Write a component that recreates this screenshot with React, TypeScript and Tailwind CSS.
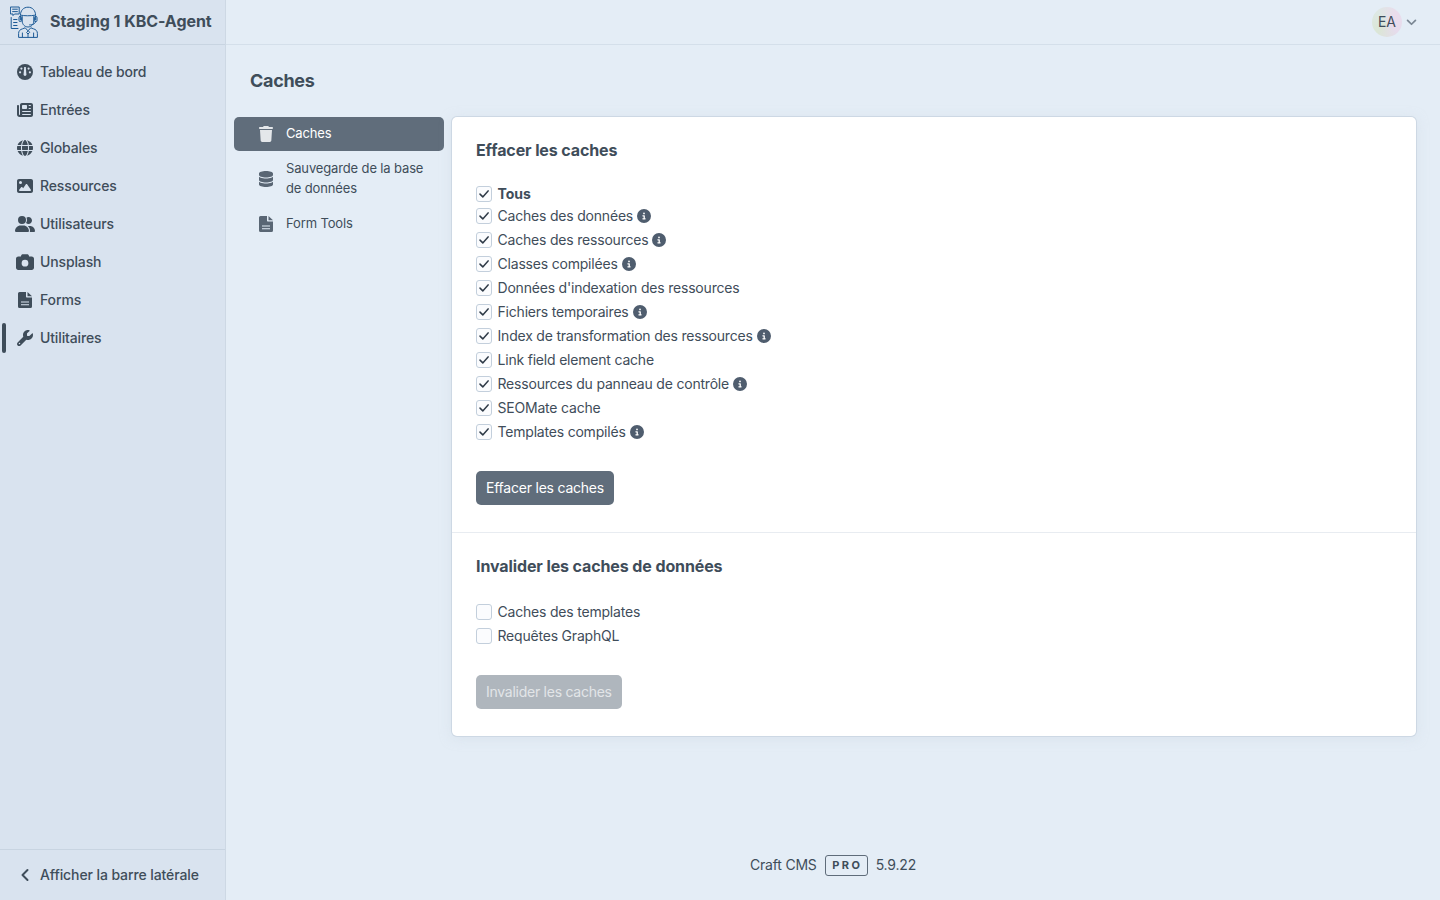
import React from "react";
import { FaNewspaper, FaGlobe, FaImage, FaUserGroup, FaCamera, FaWrench, FaTrash, FaDatabase, FaCircleInfo } from "react-icons/fa6";

function Gauge({ className }: { className?: string }) {
  return (
    <svg viewBox="0 0 16 16" className={className}>
      <circle cx="8" cy="8" r="8" fill="currentColor" />
      <g fill="#d9e3ef">
        <circle cx="3.100" cy="8.300" r="1.100" />
        <circle cx="4.400" cy="4.600" r="1.100" />
        <circle cx="11.600" cy="4.600" r="1.100" />
        <circle cx="12.900" cy="8.300" r="1.100" />
        <path d="M7.200 3h1.600l.6 7.500a1.400 1.400 0 1 1-2.800 0z" />
      </g>
    </svg>
  );
}

function PageIcon({ className, line }: { className?: string; line: string }) {
  return (
    <svg viewBox="0 0 14 16" className={className}>
      <path fill="currentColor" d="M1.500 0H8v4.500c0 .6.400 1 1 1h5V14.500A1.500 1.500 0 0 1 12.500 16h-11A1.500 1.500 0 0 1 0 14.500v-13A1.500 1.500 0 0 1 1.500 0z" />
      <path fill="currentColor" d="M9.500 0 14 4.200H9.500z" />
      <path stroke={line} strokeWidth="1.100" d="M3 10h8M3 12.700h8" />
    </svg>
  );
}

const nav = [
  { label: "Tableau de bord", icon: <Gauge className="h-[16px] w-[16px]" /> },
  { label: "Entrées", icon: <FaNewspaper className="h-[16px] w-[16px]" /> },
  { label: "Globales", icon: <FaGlobe className="h-[16px] w-[16px]" /> },
  { label: "Ressources", icon: <FaImage className="h-[16px] w-[16px]" /> },
  { label: "Utilisateurs", icon: <FaUserGroup className="h-[16px] w-[20px] shrink-0" /> },
  { label: "Unsplash", icon: <FaCamera className="h-[18px] w-[18px] shrink-0" /> },
  { label: "Forms", icon: <PageIcon line="#d9e3ef" className="h-[16px] w-[14px]" /> },
  { label: "Utilitaires", icon: <FaWrench className="h-[16px] w-[16px]" />, active: true },
];

const caches: [string, boolean][] = [
  ["Caches des données", true],
  ["Caches des ressources", true],
  ["Classes compilées", true],
  ["Données d'indexation des ressources", false],
  ["Fichiers temporaires", true],
  ["Index de transformation des ressources", true],
  ["Link field element cache", false],
  ["Ressources du panneau de contrôle", true],
  ["SEOMate cache", false],
  ["Templates compilés", true],
];

function Box({ checked }: { checked: boolean }) {
  return (
    <span className="flex h-4 w-4 shrink-0 items-center justify-center rounded-[3px] border border-[#c3cfdc] bg-[#fbfcfe]">
      {checked && (
        <svg viewBox="0 0 14 14" className="h-[14px] w-[14px]" fill="none" stroke="#2f3b48" strokeWidth="1.500" strokeLinecap="round" strokeLinejoin="round">
          <path d="M3 7.100 5.800 9.900 11.100 3.900" />
        </svg>
      )}
    </span>
  );
}

function Row({ label, info, checked = true, bold = false, h = "h-6" }: { label: string; info?: boolean; checked?: boolean; bold?: boolean; h?: string }) {
  return (
    <div className={`flex ${h} items-center`}>
      <Box checked={checked} />
      <span className={`ml-[5.5px] pb-[2px] ${bold ? "font-bold" : "tracking-[-0.2px]"}`}>{label}</span>
      {info && <FaCircleInfo className="ml-[4px] h-[14px] w-[14px] text-[#4f5d6e]" />}
    </div>
  );
}

export default function App() {
  return (
    <div className="flex min-h-[900px] bg-[#e4edf6] text-[14px] text-[#3f4d5a] font-['Inter',sans-serif]">
      <aside className="flex h-[900px] w-[226px] shrink-0 flex-col border-r border-[#cdd8e4] bg-[#d9e3ef]">
        <div className="flex h-[45px] shrink-0 items-center border-b border-[#c8d4e1] pl-[10px]">
          <svg viewBox="0 0 30 32" className="h-[32px] w-[30px]" fill="none" stroke="#1c5a96" strokeWidth="1" strokeLinejoin="round" strokeLinecap="round">
            <path d="M.8 1h8.400v7H4.500L3 9.600V8H.8z" />
            <path d="M2.600 3.200h4.800M2.600 5.600h4.800" />
            <path d="M1.200 11.500v11h6.800M3.600 13.500h3.400M3.600 16.500h3.400M3.600 19.500h3.400" />
            <path d="M10.400 14V9.500C10.400 4.500 13.500 1.200 18 1.200s7.600 3.300 7.600 8.300V14" />
            <path d="M11 9.200c3 .8 10 .8 14 0" />
            <rect x="9" y="10.500" width="2.600" height="5" rx="1" />
            <rect x="24.400" y="10.500" width="2.600" height="5" rx="1" />
            <path d="M12.200 10.500v4.500c0 3.400 2.600 6 5.800 6s5.800-2.600 5.800-6v-4.500" />
            <path d="M25.600 15.500c0 2.200-2.600 3.400-6 3.400" />
            <path d="M8.600 31v-3.600c0-2.400 1.600-4 4-4.600l2.600-1 2.800 3 2.800-3 2.600 1c2.400.6 4 2.200 4 4.600V31z" />
            <path d="M18 25l-1.400 1.600 1.400 1.400 1.400-1.400zM18 28v3M12.400 31v-4M23.600 31v-4" />
          </svg>
          <span className="ml-[10px] pb-[2px] text-[16px] font-bold tracking-[-0.05px] whitespace-nowrap">Staging 1 KBC-Agent</span>
        </div>
        <nav className="flex flex-1 flex-col pt-[8px]">
          {nav.map(({ label, icon, active }) => (
            <div key={label} className="relative flex h-[38px] items-center pl-[16px] font-medium">
              {active && <span className="absolute left-[2px] top-[4px] h-[30px] w-[4px] rounded-full bg-[#3f4d5a]" />}
              <span className="flex w-[18px] justify-center">{icon}</span>
              <span className="ml-[6px] pb-[2px] tracking-[-0.13px]">{label}</span>
            </div>
          ))}
        </nav>
        <div className="flex h-[51px] shrink-0 items-center border-t border-[#c8d4e1] pl-[16px] font-medium">
          <span className="flex w-[18px] justify-center">
            <svg viewBox="0 0 10 14" className="h-[14px] w-[10px]" fill="none" stroke="#3f4d5a" strokeWidth="2" strokeLinecap="round" strokeLinejoin="round"><path d="M7.500 2 2.500 7l5 5" /></svg>
          </span>
          <span className="ml-[6px] pb-[2px] tracking-[-0.1px]">Afficher la barre latérale</span>
        </div>
      </aside>

      <main className="flex h-[900px] flex-1 flex-col">
        <header className="flex h-[45px] shrink-0 items-center justify-end border-b border-[#d4dfea] pr-[23px]">
          <span className="flex h-[30px] w-[30px] items-center justify-center rounded-full bg-[conic-gradient(from_45deg,#eadcec,#e6dcec,#dbe6d6,#dde8e4,#eadcec)] pb-[2px]">EA</span>
          <svg viewBox="0 0 12 8" className="ml-[4px] h-[7px] w-[11px]" fill="none" stroke="#7b8794" strokeWidth="2" strokeLinecap="round" strokeLinejoin="round"><path d="M1.500 1.500 6 6l4.500-4.500" /></svg>
        </header>

        <h1 className="ml-[24px] mt-[24px] h-[24px] text-[18px] leading-[24px] font-bold tracking-[-0.3px]">Caches</h1>

        <div className="mt-[24px] flex items-start pl-[8px] pr-[24px]">
          <div className="w-[210px] shrink-0 text-[13px] tracking-[-0.14px]">
            <div className="flex h-[34px] items-center rounded-[5px] bg-[#606d7b] pl-[25px] text-white">
              <FaTrash className="h-[16px] w-[14px] text-[#e4e7ea]" />
              <span className="ml-[13px]">Caches</span>
            </div>
            <div className="flex h-[55px] items-center pl-[25px] leading-[20px]">
              <FaDatabase className="h-[16px] w-[14px] shrink-0 text-[#596674]" />
              <span className="ml-[13px] pb-[2px]">Sauvegarde de la base<br />de données</span>
            </div>
            <div className="flex h-[35px] items-center pl-[25px]">
              <PageIcon line="#e4edf6" className="h-[16px] w-[14px] text-[#596674]" />
              <span className="ml-[13px]">Form Tools</span>
            </div>
          </div>

          <section className="ml-[8px] flex-1 rounded-[5px] bg-white shadow-[0_0_0_1px_#cdd8e4,0_2px_12px_#cdd8e480]">
            <div className="h-[416px] border-b border-[#e8ecf1] px-[24px] pt-[22px]">
              <h2 className="h-[22px] text-[16px] leading-[22px] font-bold tracking-[-0.11px]">Effacer les caches</h2>
              <div className="mt-[23px]">
                <Row label="Tous" bold h="h-[20px]" />
                {caches.map(([l, i]) => <Row key={l} label={l} info={i} />)}
              </div>
              <button className="mt-[27px] flex h-[34px] items-center rounded-[5px] bg-[#606d7b] px-[10px] tracking-[-0.22px] text-white"><span className="pb-[2px]">Effacer les caches</span></button>
            </div>
            <div className="h-[203px] px-[24px] pt-[22px]">
              <h2 className="h-[22px] text-[16px] leading-[22px] font-bold tracking-[-0.11px]">Invalider les caches de données</h2>
              <div className="mt-[23px]">
                <Row label="Caches des templates" checked={false} />
                <Row label="Requêtes GraphQL" checked={false} />
              </div>
              <button className="mt-[27px] flex h-[34px] items-center rounded-[5px] bg-[#afb6bd] px-[10px] tracking-[-0.26px] text-[#e2e5e8]"><span className="pb-[2px]">Invalider les caches</span></button>
            </div>
          </section>
        </div>

        <footer className="mt-auto flex h-[70px] shrink-0 items-start justify-center pt-[24px]">
          <div className="flex items-center tracking-[-0.2px]">
            <span className="pb-[1px]">Craft CMS</span>
            <span className="ml-[8px] flex h-[21px] w-[43px] items-center justify-center rounded-[3px] border border-[#5f6c7a] pl-[2.500px] text-[11px] font-bold tracking-[2.500px]">PRO</span>
            <span className="ml-[8px] pb-[1px]">5.9.22</span>
          </div>
        </footer>
      </main>
    </div>
  );
}
